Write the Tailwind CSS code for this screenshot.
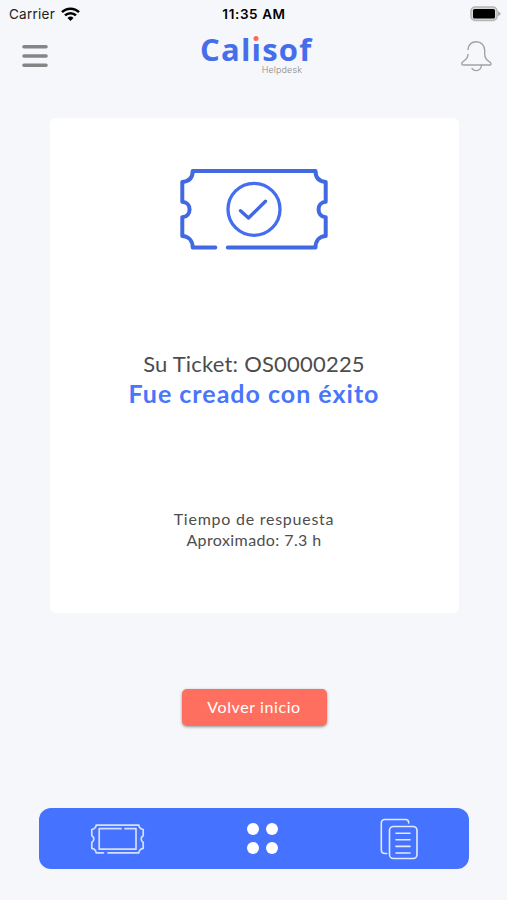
<!DOCTYPE html>
<html lang="es">
    <head>
        <meta charset="UTF-8" />
        <meta name="viewport" content="width=device-width, initial-scale=1.0" />
        <title>Calisof Helpdesk</title>
        <script src="https://cdn.jsdelivr.net/npm/@tailwindcss/browser@4"></script>
    </head>
    <body class="bg-[#f5f7fb] h-screen flex flex-col items-center overflow-hidden font-[Lato,sans-serif] text-[#4d4d4d]">
        <!-- status bar -->
        <div class="w-full h-7 pl-[9px] pr-[6px] grid grid-cols-3 items-center shrink-0 font-[Inter,sans-serif] text-[#222]">
            <div class="flex items-center gap-[6px]">
                <span class="text-[13.5px] tracking-[0.25px]">Carrier</span>
                <svg class="w-[19px] h-[14px]" viewBox="0 0 19 14" fill="none" stroke="#000" stroke-width="2.5">
                    <path d="M1 5.2a12 12 0 0 1 17 0M4 8.4a7.8 7.8 0 0 1 11 0" />
                    <path d="M9.5 14l-3-3.1a4.3 4.3 0 0 1 6 0z" fill="#000" stroke="none" />
                </svg>
            </div>
            <span class="text-[13.5px] font-semibold text-center tracking-[0.6px] mr-[2px] text-black whitespace-nowrap">11:35 AM</span>
            <svg class="w-[31px] h-[16px] justify-self-end" viewBox="0 0 31 16">
                <rect x="1" y="1" width="26" height="13.5" rx="4" fill="#d8d8d8" stroke="#b5b5b5" stroke-width="1.5" />
                <rect x="3" y="3" width="22" height="9.5" rx="1.5" fill="#000" />
                <path d="M28 5l3 2.8-3 2.8z" fill="#aaa" />
            </svg>
        </div>

        <!-- header -->
        <header class="w-full h-[56px] pl-[22px] pr-[14px] flex justify-between items-center shrink-0">
            <svg class="w-[26px] h-[24px]" viewBox="0 0 26 24" stroke="#858585" stroke-width="3.6" stroke-linecap="round">
                <path d="M2 2.7h22M2 12h22M2 21.3h22" />
            </svg>
            <div class="w-[111px] h-[40px] flex flex-col">
                <div class="h-[27px] leading-[27px] text-[31px] font-bold text-[#466eea] tracking-[1.2px] whitespace-nowrap font-['Open_Sans',sans-serif]"><span class="ml-px">Cal</span><span class="relative">ı<span class="absolute left-1/2 -translate-x-1/2 ml-[-1px] top-[8px] size-[5px] rounded-full bg-[#fb6759]"></span></span>sof</div>
                <span class="mt-[2px] text-[9px] leading-[10px] tracking-[0.1px] font-light text-[#888] self-end mr-[8px] font-[Inter,sans-serif]">Helpdesk</span>
            </div>
            <svg class="w-[32px] h-[32px]" viewBox="461 40 32 32" fill="none" stroke="#a3a3a3" stroke-width="1.4" stroke-linecap="round" stroke-linejoin="round">
                <path d="M468 49.5c.7-5 4-7.8 8.3-7.8 5 0 8.4 3.8 8.4 8.8v3.5c0 4.2 1.7 6 4.6 7.7 2.3 1.3 2 3.3.5 3.3h-26.600c-1.800 0-2-2-.300-3.200 3.200-2.200 5-3.700 5.100-7.300" />
                <path d="M472 68.500c2.700 3.700 9 2.500 9.500-3.200" />
            </svg>
        </header>

        <!-- card -->
        <main class="w-[409px] h-[495px] mt-[34px] ml-px pt-[50px] bg-white rounded-md flex flex-col items-center text-center shrink-0">
            <svg class="w-[148px] h-[82px]" viewBox="180 168 148 82" fill="none" stroke="#4169e1" stroke-width="4" stroke-linecap="round" stroke-linejoin="round">
                <path d="M215.3 247.6H192.7C192.7 241 189 236.3 182.3 236V217.2C192 216.5 192 202.5 182.3 201.8V182C189 181.5 192.7 177.5 192.7 171H315.5C315.5 177.5 319 181.5 325.7 182V201.8C316.2 202.5 316.2 216.5 325.7 217.2V236C319 236.3 315.5 241 315.5 247.6H227.8" />
                <circle cx="254" cy="209.3" r="26" stroke-width="3.3" stroke="#456df0" />
                <path d="M240.5 210.7L248.5 218L265.5 201.2" stroke-width="3.4" />
            </svg>
            <p class="mt-[100px] text-[22px] leading-[28px] tracking-[0.2px] whitespace-nowrap">Su Ticket: OS0000225</p>
            <p class="text-[25px] leading-[30px] font-bold text-[#4775fb] tracking-[1px] whitespace-nowrap">Fue creado con éxito</p>
            <p class="mt-[101px] text-[16px] leading-[20.5px] tracking-[0.75px] whitespace-nowrap">Tiempo de respuesta</p>
            <p class="text-[16px] leading-[20.5px] tracking-[0.4px] whitespace-nowrap">Aproximado: 7.3 h</p>
        </main>

        <button class="w-[145px] h-[37px] mt-[76px] ml-px pb-[2px] bg-[#ff6f5f] text-white text-[16px] tracking-[0.6px] rounded-[5px] shadow-[0_1px_3px_rgba(0,0,0,0.4)] shrink-0">Volver inicio</button>

        <!-- bottom navigation -->
        <nav class="w-[430px] h-[61px] mt-[82px] pl-[51px] pr-[50px] bg-[#4573ff] rounded-xl flex items-center justify-between shrink-0">
            <svg class="w-[55px] h-[32px]" viewBox="89.5 823 55 32" fill="none" stroke="#d5dfff" stroke-width="1.7" stroke-linecap="round" stroke-linejoin="round">
                <path d="M103 852.8H95.7Q95.2 849 91.3 848.4V842.5Q95.4 839 91.3 835.5V829.5Q95.2 828.8 95.7 825.2H138.3Q138.8 828.8 142.7 829.5V835.5Q138.6 839 142.7 842.5V848.4Q138.8 849 138.3 852.8H107.5" />
                <path d="M120.5 828.7H98.7V849.2H135.5V828.7H124.5" />
            </svg>
            <div class="grid grid-cols-2 gap-x-[7px] gap-y-[7px]">
                <span class="size-3 rounded-full bg-white"></span>
                <span class="size-3 rounded-full bg-white"></span>
                <span class="size-3 rounded-full bg-white"></span>
                <span class="size-3 rounded-full bg-white"></span>
            </div>
            <svg class="w-[39px] h-[42px]" viewBox="380 818 39 42" fill="none" stroke="#e4eaff" stroke-width="1.6" stroke-linecap="round">
                <path d="M408.700 823v-.300q0-3.200-3.200-3.200h-20.500q-3.700 0-3.700 3.700v26.600q0 3.700 3.700 3.700h1.700" />
                <rect x="389.5" y="826.5" width="27.5" height="32" rx="4" />
                <path d="M396 833.3h14M396 839.8h14M396 846.4h14M396 853h14" />
            </svg>
        </nav>
    </body>
</html>
